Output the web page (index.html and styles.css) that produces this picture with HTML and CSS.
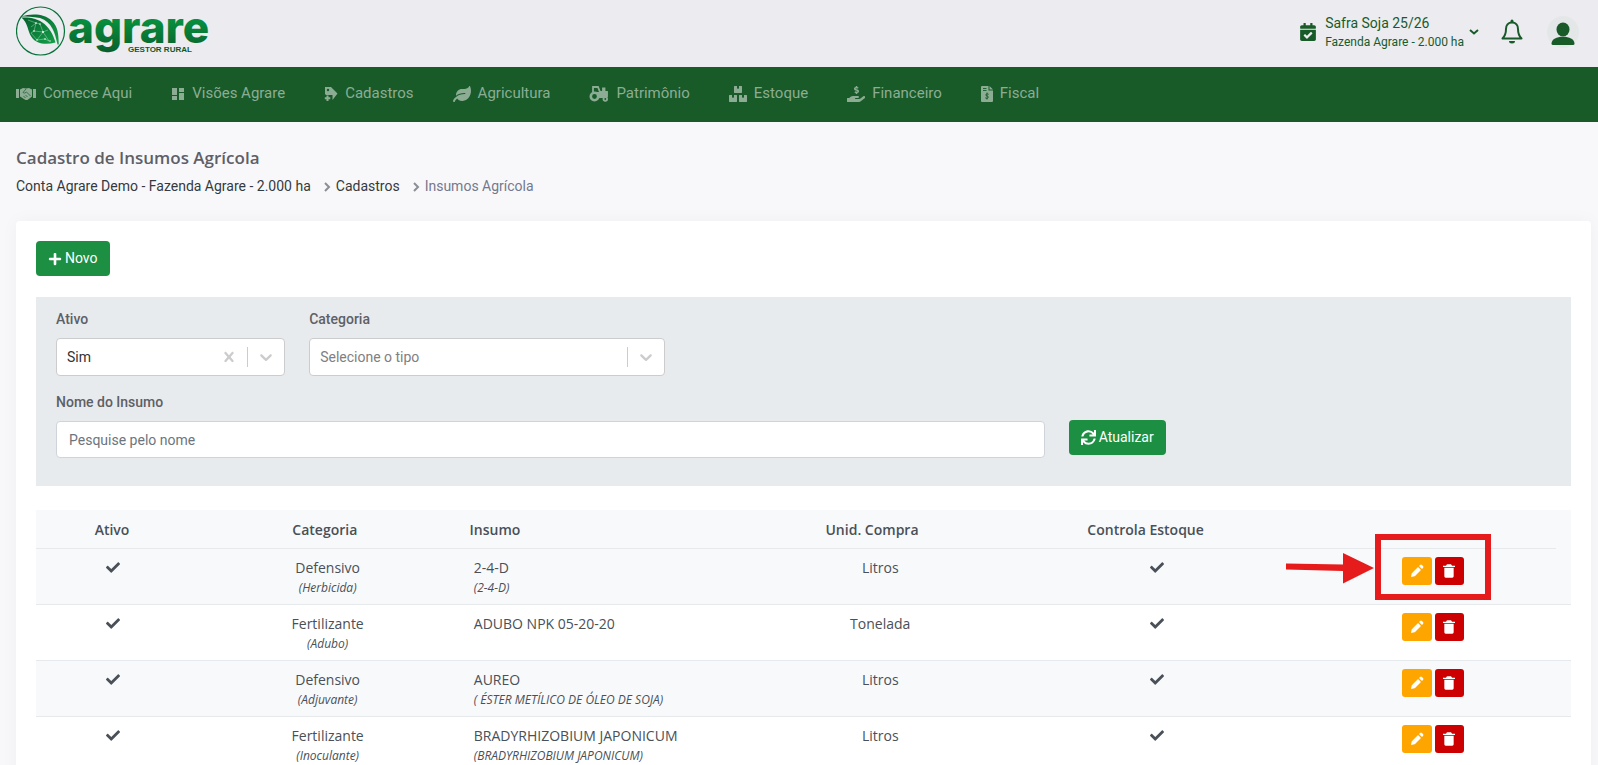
FILE: index.html
```html
<!DOCTYPE html>
<html lang="pt-BR">
<head>
<meta charset="utf-8">
<title>Agrare - Insumos Agrícola</title>
<link rel="stylesheet" href="styles.css">
</head>
<body>
<svg class="sprite" aria-hidden="true">
  <symbol id="check" viewBox="0 0 512 512"><path d="M173.898 439.404l-166.4-166.4c-9.997-9.997-9.997-26.206 0-36.204l36.203-36.204c9.997-9.998 26.207-9.998 36.204 0L192 312.690 432.095 72.596c9.997-9.997 26.207-9.997 36.204 0l36.203 36.204c9.997 9.997 9.997 26.206 0 36.204l-294.400 294.401c-9.998 9.997-26.207 9.997-36.204-.001z"/></symbol>
  <symbol id="pencil" viewBox="0 0 24 24"><path d="M8.707 19.707 18 10.414 13.586 6l-9.293 9.293a1.003 1.003 0 0 0-.263.464L3 21l5.242-1.030c.176-.044.337-.135.465-.263zM21 7.414a2 2 0 0 0 0-2.828L19.414 3a2 2 0 0 0-2.828 0L15 4.586 19.414 9 21 7.414z"/></symbol>
  <symbol id="trash" viewBox="0 0 24 24"><path d="M5 7v13a2 2 0 0 0 2 2h10a2 2 0 0 0 2-2V7zM16.618 4 15 2H9L7.382 4H3v2h18V4z"/></symbol>
  <symbol id="down" viewBox="0 0 20 20"><path d="M4.516 7.548c.436-.446 1.043-.481 1.576 0L10 11.295l3.908-3.747c.533-.481 1.141-.446 1.574 0 .436.445.408 1.197 0 1.615l-4.695 4.502a1.095 1.095 0 0 1-1.576 0S4.924 9.581 4.516 9.163c-.409-.418-.436-1.170 0-1.615z"/></symbol>
</svg>

<header class="topbar">
  <a class="brand" href="#" aria-label="Agrare Gestor Rural">
    <svg width="204" height="54" viewBox="0 0 204 54">
      <defs>
        <linearGradient id="word" x1="0" y1="0" x2="0" y2="1"><stop offset=".3" stop-color="#079540"/><stop offset="1" stop-color="#095c2c"/></linearGradient>
        <linearGradient id="leaf" x1="0" y1="0" x2="1" y2="1"><stop offset="0" stop-color="#04602b"/><stop offset="1" stop-color="#15a04a"/></linearGradient>
      </defs>
      <circle cx="24.500" cy="26" r="24" fill="none" stroke="#08713a" stroke-width="1.200"/>
      <path d="M5 11.500C15 8.500 28 8 36 16c6 6 6.500 13 6.800 23.500h-1.300C39 28 36 17 24 13 17 11.500 10 11.500 5 11.500z" fill="url(#leaf)"/>
      <path d="M5.500 12.500c8-.5 17 1 23 6.500C35 25 37.500 31 39.500 37.500c-9 2.500-19 2-24-5.500C11.500 26 12 18 5.500 12.500z" fill="url(#leaf)"/>
      <path d="M12 15l8 3-2 8 9 1-3-8-4-1M18 26l-3 2 6 7 6-8 6 9M21 35l8-1 4 2M27 27l5-2M15 22l5-4" fill="none" stroke="#d5ecdc" stroke-width=".4"/>
      <g fill="#fff"><circle cx="20" cy="18" r=".8"/><circle cx="18" cy="26" r=".8"/><circle cx="27" cy="27" r=".9"/><circle cx="21" cy="35" r=".7"/><circle cx="29" cy="34" r=".8"/><circle cx="24" cy="19" r=".7"/><circle cx="34" cy="36" r=".7"/></g>
      <text class="brand-word" x="52" y="38" fill="url(#word)">agrare</text>
      <text class="brand-tag" x="112" y="47">GESTOR RURAL</text>
    </svg>
  </a>
  <button class="season" type="button">
    <svg width="16" height="18" viewBox="0 0 448 512" fill="currentColor"><path d="M436 160H12c-6.627 0-12-5.373-12-12v-36c0-26.510 21.490-48 48-48h48V12c0-6.627 5.373-12 12-12h40c6.627 0 12 5.373 12 12v52h128V12c0-6.627 5.373-12 12-12h40c6.627 0 12 5.373 12 12v52h48c26.510 0 48 21.490 48 48v36c0 6.627-5.373 12-12 12zM12 192h424c6.627 0 12 5.373 12 12v260c0 26.510-21.490 48-48 48H48c-26.510 0-48-21.490-48-48V204c0-6.627 5.373-12 12-12zm333.296 95.947l-28.169-28.398c-4.667-4.705-12.265-4.736-16.970-.068L194.120 364.665l-45.980-46.352c-4.667-4.705-12.266-4.736-16.971-.068l-28.397 28.170c-4.705 4.667-4.736 12.265-.068 16.970l82.601 83.269c4.667 4.705 12.265 4.736 16.970.068l142.953-141.805c4.705-4.667 4.736-12.265.068-16.970z"/></svg>
    <span class="season-text"><span class="season-name">Safra Soja 25/26</span><span class="season-farm">Fazenda Agrare - 2.000 ha</span></span>
    <svg width="10" height="6" viewBox="0 0 10 6" fill="none" stroke="currentColor" stroke-width="2"><path d="M1 1l4 3.500L9 1"/></svg>
  </button>
  <button class="icon-button" type="button" aria-label="Notificações">
    <svg width="22" height="26" viewBox="0 0 22 26"><path d="M11 3.500c-4 0-6 3-6 6.500 0 5-1 7-3.500 9.500h19C18 17 17 15 17 10c0-3.500-2-6.500-6-6.500z" fill="none" stroke="currentColor" stroke-width="2" stroke-linejoin="round"/><path d="M9.500 3.500V2a1.500 1.500 0 0 1 3 0v1.500zM8 22h6a3 2.500 0 0 1-6 0z" fill="currentColor"/></svg>
  </button>
  <button class="avatar" type="button" aria-label="Perfil">
    <svg width="32" height="32" viewBox="0 0 32 32" fill="currentColor"><ellipse cx="16" cy="13.500" rx="6.500" ry="7"/><path d="M4.500 27.500C5 23 9.500 20.800 16 20.800S27 23 27.500 27.500q0 1.500-1.500 1.500H6q-1.500 0-1.500-1.500z"/></svg>
  </button>
</header>

<nav class="menu">
  <a href="#"><svg width="20" height="14" viewBox="0 0 20 14"><path fill="currentColor" d="M0 2h3v9H0zM17 2h3v9h-3zM4 2.500 7 1l3 .5L13 1l3 1.500v7L11.500 13h-2L4 9.500z"/><path d="M10 2 7 5.500q1.500 1.500 3.500-.5l4 4M7.500 9l2 2M9.500 8l2 2" fill="none" stroke="#185b29" stroke-width=".7"/></svg>Comece Aqui</a>
  <a href="#"><svg width="14" height="14" viewBox="0 0 14 14" fill="currentColor"><path d="M1 1h5v7H1zM8 1h5v4H8zM1 9h5v4H1zM8 6h5v7H8z"/></svg>Visões Agrare</a>
  <a href="#"><svg width="14" height="16" viewBox="0 0 14 16"><path fill="currentColor" d="M1 1h6l6.500 6.500L8.500 14V9H2L1 8z"/><circle cx="4" cy="4" r="1.200" fill="#185b29"/><path d="M3.500 9.500v5.500M.8 12.200h5.500" stroke="currentColor" stroke-width="2"/></svg>Cadastros</a>
  <a href="#"><svg width="18" height="16" viewBox="0 0 576 512" fill="currentColor"><path d="M546.200 9.700c-5.600-12.500-21.600-13-28.300-1.200C486.900 62.400 431.400 96 368 96h-80C182 96 96 182 96 288c0 7 .8 13.700 1.500 20.500C161.300 262.800 253.400 224 384 224c8.800 0 16 7.200 16 16s-7.200 16-16 16C132.600 256 26 410.100 2.400 468c-6.600 16.300 1.200 34.900 17.500 41.600 16.400 6.800 35-1.100 41.800-17.300 1.500-3.600 20.900-47.900 71.900-90.600 32.400 43.900 94 85.800 174.900 77.200C465.500 467.500 576 326.700 576 154.300c0-50.200-10.800-102.200-29.800-144.600z"/></svg>Agricultura</a>
  <a href="#"><svg width="20" height="16" viewBox="0 0 20 16"><path d="M4 6V1h5l2 5h3V2.500h1.500V6H18v4H9" fill="none" stroke="currentColor" stroke-width="1.800"/><path d="M4 6h14.500v4L15 12h-9z" fill="currentColor"/><circle cx="5.500" cy="10.500" r="3.700" fill="#185b29" stroke="currentColor" stroke-width="2.600"/><circle cx="16.300" cy="13" r="1.800" fill="#185b29" stroke="currentColor" stroke-width="1.800"/></svg>Patrimônio</a>
  <a href="#"><svg width="18" height="16" viewBox="0 0 576 512" fill="currentColor"><path d="M560 288h-80v96l-32-21.300-32 21.300v-96h-80c-8.800 0-16 7.200-16 16v192c0 8.800 7.200 16 16 16h224c8.800 0 16-7.200 16-16V304c0-8.800-7.200-16-16-16zm-384-64h224c8.800 0 16-7.200 16-16V16c0-8.800-7.200-16-16-16h-80v96l-32-21.300L256 96V0h-80c-8.800 0-16 7.200-16 16v192c0 8.800 7.200 16 16 16zm64 64h-80v96l-32-21.300L96 384v-96H16c-8.800 0-16 7.200-16 16v192c0 8.800 7.200 16 16 16h224c8.800 0 16-7.200 16-16V304c0-8.800-7.200-16-16-16z"/></svg>Estoque</a>
  <a href="#"><svg width="18" height="16" viewBox="0 0 576 512" fill="currentColor"><path d="M271.060 144.300l54.270 14.300a8.590 8.590 0 0 1 6.630 8.100c0 4.600-4.090 8.400-9.120 8.400h-35.600a30 30 0 0 1-11.190-2.200c-5.240-2.200-11.280-1.700-15.300 2l-19 17.500a11.680 11.680 0 0 0-2.250 2.660 11.420 11.420 0 0 0 3.880 15.740 83.770 83.770 0 0 0 34.510 11.500V240c0 8.800 7.830 16 17.370 16h17.370c9.550 0 17.380-7.200 17.380-16v-17.600c32.930-3.600 57.840-31 53.500-63-3.150-23-22.460-41.300-46.560-47.700L282.680 97.400a8.590 8.590 0 0 1-6.630-8.100c0-4.600 4.090-8.400 9.120-8.400h35.600A30 30 0 0 1 332 83.100c5.230 2.200 11.280 1.700 15.300-2l19-17.500A11.310 11.310 0 0 0 368.470 61a11.430 11.430 0 0 0-3.840-15.780 83.820 83.820 0 0 0-34.520-11.500V16c0-8.800-7.820-16-17.370-16h-17.370C285.820 0 278 7.200 278 16v17.600c-32.890 3.600-57.850 31-53.510 63 3.150 23 22.520 41.300 46.570 47.700zM565.270 328.100c-11.800-10.700-30.200-10-42.600 0L430.270 402a63.640 63.640 0 0 1-40 14H272a16 16 0 0 1 0-32h78.290c15.900 0 30.710-10.900 33.250-26.600a31.200 31.200 0 0 0 .46-5.460A32 32 0 0 0 352 320H192a117.660 117.660 0 0 0-74.100 26.290L71.400 384H16a16 16 0 0 0-16 16v96a16 16 0 0 0 16 16h372.770a64 64 0 0 0 40-14L564 390a32 32 0 0 0 1.270-61.900z"/></svg>Financeiro</a>
  <a href="#"><svg width="12" height="16" viewBox="0 0 12 16"><path fill="currentColor" d="M1 0h6.500v4.500H12V15a1 1 0 0 1-1 1H1a1 1 0 0 1-1-1V1a1 1 0 0 1 1-1zM8.500 0 12 3.500H8.500z"/><path d="M2 2.500h3.500M2 4.500h3.500M6 6.500v7M7.700 8.300Q6 7.200 5 8.300t1 1.600 1 2-2.800-.1" fill="none" stroke="#185b29" stroke-width=".9"/></svg>Fiscal</a>
</nav>

<main class="page">
  <h1 class="page-title">Cadastro de Insumos Agrícola</h1>
  <ol class="crumbs">
    <li><a href="#">Conta Agrare Demo - Fazenda Agrare - 2.000 ha</a></li>
    <li><svg class="crumb-sep" width="7" height="10" viewBox="0 0 7 10"><path d="M1 1l4 4-4 4"/></svg><a href="#">Cadastros</a></li>
    <li class="current"><svg class="crumb-sep" width="7" height="10" viewBox="0 0 7 10"><path d="M1 1l4 4-4 4"/></svg>Insumos Agrícola</li>
  </ol>

  <section class="card">
    <button class="btn" type="button"><svg width="14" height="14" viewBox="0 0 448 512" fill="currentColor"><path d="M416 208H272V64c0-17.670-14.330-32-32-32h-32c-17.670 0-32 14.330-32 32v144H32c-17.670 0-32 14.330-32 32v32c0 17.670 14.330 32 32 32h144v144c0 17.670 14.330 32 32 32h32c17.670 0 32-14.330 32-32V304h144c17.670 0 32-14.330 32-32v-32c0-17.670-14.330-32-32-32z"/></svg>Novo</button>

    <form class="filters">
      <div class="field span-2">
        <label for="ativo">Ativo</label>
        <div class="picker">
          <select id="ativo"><option>Sim</option><option>Não</option></select>
          <button class="clear" type="button" aria-label="Limpar"><svg width="20" height="20" viewBox="0 0 20 20" fill="currentColor"><path d="M14.348 14.849c-.469.469-1.229.469-1.697 0L10 11.819l-2.651 3.029c-.469.469-1.229.469-1.697 0-.469-.469-.469-1.229 0-1.697l2.758-3.150-2.759-3.152c-.469-.469-.469-1.228 0-1.697s1.228-.469 1.697 0L10 8.183l2.651-3.031c.469-.469 1.228-.469 1.697 0s.469 1.229 0 1.697l-2.758 3.152 2.758 3.150c.469.469.469 1.229 0 1.698z"/></svg></button>
          <span class="bar"></span>
          <svg class="caret" width="20" height="20"><use href="#down"/></svg>
        </div>
      </div>
      <div class="field span-3">
        <label for="categoria">Categoria</label>
        <div class="picker">
          <select id="categoria" class="empty"><option>Selecione o tipo</option></select>
          <span class="bar"></span>
          <svg class="caret" width="20" height="20"><use href="#down"/></svg>
        </div>
      </div>
      <div class="field span-8 new-row">
        <label for="nome">Nome do Insumo</label>
        <input id="nome" class="text-input" type="text" placeholder="Pesquise pelo nome">
      </div>
      <div class="refresh span-2">
        <button class="btn" type="button"><svg width="15" height="15" viewBox="0 0 512 512" fill="currentColor"><path d="M440.650 12.570l4 82.770A247.160 247.160 0 0 0 255.830 8C134.730 8 33.910 94.920 12.290 209.820A12 12 0 0 0 24.090 224h49.050a12 12 0 0 0 11.670-9.260 175.910 175.910 0 0 1 317-56.940l-101.460-4.860a12 12 0 0 0-12.570 12v47.410a12 12 0 0 0 12 12H500a12 12 0 0 0 12-12V12a12 12 0 0 0-12-12h-47.370a12 12 0 0 0-11.980 12.570zM255.830 432a175.610 175.610 0 0 1-146-77.800l101.800 4.870a12 12 0 0 0 12.570-12v-47.400a12 12 0 0 0-12-12H12a12 12 0 0 0-12 12V500a12 12 0 0 0 12 12h47.350a12 12 0 0 0 12-12.600l-4.150-82.570A247.170 247.170 0 0 0 255.830 504c121.110 0 221.930-86.920 243.550-201.820a12 12 0 0 0-11.800-14.180h-49.050a12 12 0 0 0-11.670 9.260A175.860 175.860 0 0 1 255.830 432z"/></svg>Atualizar</button>
      </div>
    </form>

    <table class="grid">
      <thead>
        <tr><th>Ativo</th><th>Categoria</th><th class="left">Insumo</th><th>Unid. Compra</th><th>Controla Estoque</th><th></th></tr>
      </thead>
      <tbody>
        <tr>
          <td><svg class="tick" role="img" aria-label="Sim"><use href="#check"/></svg></td>
          <td>Defensivo<em>(Herbicida)</em></td><td class="left">2-4-D<em>(2-4-D)</em></td><td>Litros</td>
          <td><svg class="tick" role="img" aria-label="Sim"><use href="#check"/></svg></td>
          <td><div class="actions"><button class="edit" type="button" aria-label="Editar"><svg><use href="#pencil"/></svg></button><button class="delete" type="button" aria-label="Excluir"><svg><use href="#trash"/></svg></button>
            <span class="callout"><svg class="arrow" width="88" height="32" viewBox="0 0 88 32"><path d="M0 11.500l57 1V1l31 15-31 15.500V19L0 17.500z"/></svg></span></div></td>
        </tr>
        <tr>
          <td><svg class="tick" role="img" aria-label="Sim"><use href="#check"/></svg></td>
          <td>Fertilizante<em>(Adubo)</em></td><td class="left">ADUBO NPK 05-20-20</td><td>Tonelada</td>
          <td><svg class="tick" role="img" aria-label="Sim"><use href="#check"/></svg></td>
          <td><div class="actions"><button class="edit" type="button" aria-label="Editar"><svg><use href="#pencil"/></svg></button><button class="delete" type="button" aria-label="Excluir"><svg><use href="#trash"/></svg></button></div></td>
        </tr>
        <tr>
          <td><svg class="tick" role="img" aria-label="Sim"><use href="#check"/></svg></td>
          <td>Defensivo<em>(Adjuvante)</em></td><td class="left">AUREO<em>( ÉSTER METÍLICO DE ÓLEO DE SOJA)</em></td><td>Litros</td>
          <td><svg class="tick" role="img" aria-label="Sim"><use href="#check"/></svg></td>
          <td><div class="actions"><button class="edit" type="button" aria-label="Editar"><svg><use href="#pencil"/></svg></button><button class="delete" type="button" aria-label="Excluir"><svg><use href="#trash"/></svg></button></div></td>
        </tr>
        <tr>
          <td><svg class="tick" role="img" aria-label="Sim"><use href="#check"/></svg></td>
          <td>Fertilizante<em>(Inoculante)</em></td><td class="left">BRADYRHIZOBIUM JAPONICUM<em>(BRADYRHIZOBIUM JAPONICUM)</em></td><td>Litros</td>
          <td><svg class="tick" role="img" aria-label="Sim"><use href="#check"/></svg></td>
          <td><div class="actions"><button class="edit" type="button" aria-label="Editar"><svg><use href="#pencil"/></svg></button><button class="delete" type="button" aria-label="Excluir"><svg><use href="#trash"/></svg></button></div></td>
        </tr>
      </tbody>
    </table>
  </section>
</main>
</body>
</html>
```

FILE: styles.css
```css
* { box-sizing: border-box; }

body {
  margin: 0;
  height: 100vh;
  overflow: hidden;
  display: flex;
  flex-direction: column;
  background: #f8f8fb;
  color: #495057;
  font-family: Roboto, "Liberation Sans", sans-serif;
  font-size: 14px;
  line-height: 21px;
}

a { color: inherit; text-decoration: none; }
button { font: inherit; border: 0; padding: 0; background: none; color: inherit; cursor: pointer; }
svg { display: block; flex: none; }
.sprite { position: absolute; width: 0; height: 0; }

/* Top bar */
.topbar {
  flex: none;
  display: flex;
  align-items: center;
  height: 67px;
  padding: 0 19px 3px 16px;
  background: #ecebf0;
  color: #185b29;
}
.brand { margin-right: auto; }
.brand-word { font: 800 44px Inter, sans-serif; }
.brand-tag { font: 700 8px "Liberation Sans", Arial, sans-serif; fill: #0a5a2b; }
.season { display: flex; align-items: center; text-align: left; }
.season-text { display: flex; flex-direction: column; margin: 0 5px 0 9px; }
.season-name { font-size: 14px; line-height: 20px; }
.season-farm { font-size: 12px; line-height: 18px; }
.icon-button { margin: 0 24px 0 22px; }
.avatar { border-radius: 50%; background: #e4e7e7; }

/* Main menu */
.menu {
  flex: none;
  display: flex;
  align-items: center;
  gap: 39px;
  height: 55px;
  padding: 0 16px 2px;
  background: #185b29;
  color: #8cad94;
  font-size: 15px;
}
.menu a { display: flex; align-items: center; gap: 7px; }

/* Page heading */
.page { flex: 1; min-height: 0; padding: 24px 7px 0 16px; }
.page-title {
  margin: 0 0 6px;
  font: 600 17px/24px "Open Sans", sans-serif;
  color: #5d6066;
}
.crumbs {
  display: flex;
  gap: 13px;
  margin: 0 0 24px;
  padding: 0;
  list-style: none;
  color: #343a40;
}
.crumbs li { display: flex; align-items: center; gap: 5px; }
.crumbs .current { color: #74788d; }
.crumb-sep { fill: none; stroke: #8a8f94; stroke-width: 2; }

.card {
  padding: 20px;
  background: #fff;
  border-radius: 4px;
  box-shadow: 0 0 18px rgba(18, 38, 63, .04);
}
.btn {
  display: flex;
  align-items: center;
  gap: 3px;
  height: 35px;
  padding: 0 12px;
  border-radius: 4px;
  background: #1c8f42;
  color: #fff;
}

/* Filters */
.filters {
  display: grid;
  grid-template-columns: repeat(12, 1fr);
  gap: 16px 24px;
  margin: 21px 0 24px;
  padding: 12px 20px 28px;
  background: #e8ebee;
}
.span-2 { grid-column-end: span 2; }
.span-3 { grid-column-end: span 3; }
.span-8 { grid-column-end: span 8; }
.new-row { grid-column-start: 1; }
.field { display: flex; flex-direction: column; gap: 8px; }
.field label { font-weight: 500; color: #5d6066; }
.picker {
  display: flex;
  align-items: center;
  height: 38px;
  border: 1px solid #ccc;
  border-radius: 4px;
  background: #fff;
  color: #ccc;
}
.picker select {
  flex: 1;
  min-width: 0;
  appearance: none;
  border: 0;
  padding: 0 10px;
  background: none;
  color: #333;
  font: inherit;
}
.picker .empty { color: #808080; }
.bar { width: 1px; height: 20px; background: #ccc; }
.clear { padding: 0 8px; }
.caret { margin: 0 8px; fill: currentColor; }
.text-input {
  height: 37px;
  border: 1px solid #ced4da;
  border-radius: 4px;
  padding: 0 12px;
  background: #fff;
  font: inherit;
}
.text-input::placeholder { color: #6c757d; }
.refresh { display: flex; align-items: flex-start; padding-top: 28px; }

/* Table */
.grid { display: block; font-family: "Open Sans", sans-serif; }
.grid thead { display: block; padding-right: 15px; background: #f8f9fb; }
.grid tbody { display: block; }
.grid tr {
  display: grid;
  grid-template-columns: 10fr 18fr 18fr 18fr 18fr 18fr;
  border-bottom: 1px solid #e6eaed;
}
.grid tbody tr:nth-child(odd) { background: #f8f9fb; }
.grid th { padding: 9px 8px 8px; font-weight: 600; font-size: 14px; }
.grid td { padding: 8px 8px 6px; text-align: center; white-space: nowrap; }
.grid .left { text-align: left; }
.grid em { display: block; font-size: 12px; line-height: 20px; }
.tick { width: 14px; height: 21px; margin: 0 auto; fill: currentColor; }
.actions { position: relative; display: flex; gap: 3px; width: 62px; margin: 0 auto; }
.actions button {
  display: grid;
  place-items: center;
  width: 30px;
  height: 28px;
  border-radius: 3px;
  color: #fff;
}
.actions .edit { background: #ffa500; }
.actions .delete { background: #c00; width: 29px; }
.actions button svg { width: 16px; height: 16px; fill: currentColor; }

/* Highlight around the first row's actions */
.callout {
  position: absolute;
  inset: -23px -27px -15px;
  border: 6px solid #e61c1c;
  pointer-events: none;
}
.arrow { position: absolute; right: calc(100% + 7px); top: 12px; fill: #e61c1c; }
```
